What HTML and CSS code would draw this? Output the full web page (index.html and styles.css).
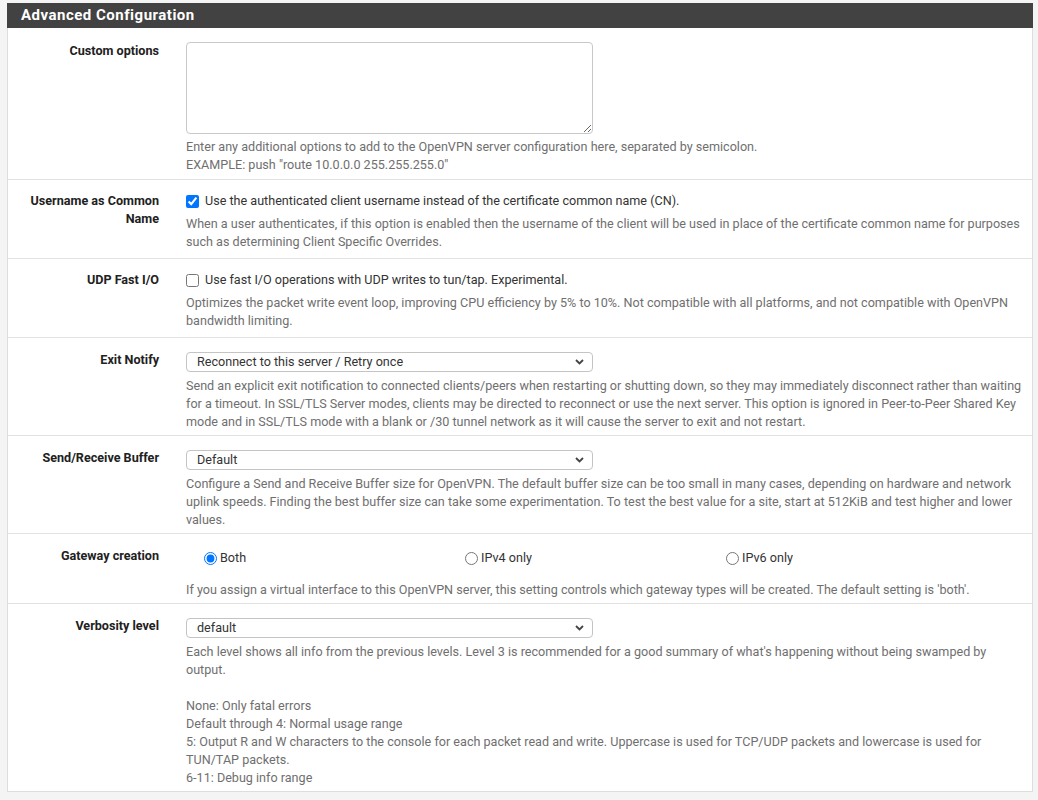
FILE: index.html
```html
<!DOCTYPE html>
<html lang="en">
<head>
<meta charset="utf-8">
<title>Advanced Configuration</title>
<link rel="stylesheet" href="styles.css">
</head>
<body>
<div class="page">
  <section class="panel">
    <h2 class="panel-title">Advanced Configuration</h2>

    <div class="row row-custom">
      <div class="label">Custom options</div>
      <div class="content">
        <textarea class="textarea"></textarea>
        <p class="help">Enter any additional options to add to the OpenVPN server configuration here, separated by semicolon.<br>EXAMPLE: push "route 10.0.0.0 255.255.255.0"</p>
      </div>
    </div>

    <div class="row row-check">
      <div class="label">Username as Common Name</div>
      <div class="content">
        <label class="check"><input type="checkbox" checked> Use the authenticated client username instead of the certificate common name (CN).</label>
        <p class="help">When a user authenticates, if this option is enabled then the username of the client will be used in place of the certificate common name for purposes such as determining Client Specific Overrides.</p>
      </div>
    </div>

    <div class="row row-check">
      <div class="label">UDP Fast I/O</div>
      <div class="content">
        <label class="check"><input type="checkbox"> Use fast I/O operations with UDP writes to tun/tap. Experimental.</label>
        <p class="help">Optimizes the packet write event loop, improving CPU efficiency by 5% to 10%. Not compatible with all platforms, and not compatible with OpenVPN bandwidth limiting.</p>
      </div>
    </div>

    <div class="row row-select">
      <div class="label">Exit Notify</div>
      <div class="content">
        <div class="select-wrap">
          <select class="select"><option>Reconnect to this server / Retry once</option></select>
          <svg class="chev" width="9" height="6" viewBox="0 0 9 6"><path d="M1 1l3.5 3.5L8 1" fill="none" stroke="#444" stroke-width="1.8"/></svg>
        </div>
        <p class="help">Send an explicit exit notification to connected clients/peers when restarting or shutting down, so they may immediately disconnect rather than waiting for a timeout. In SSL/TLS Server modes, clients may be directed to reconnect or use the next server. This option is ignored in Peer-to-Peer Shared Key mode and in SSL/TLS mode with a blank or /30 tunnel network as it will cause the server to exit and not restart.</p>
      </div>
    </div>

    <div class="row row-select">
      <div class="label">Send/Receive Buffer</div>
      <div class="content">
        <div class="select-wrap">
          <select class="select"><option>Default</option></select>
          <svg class="chev" width="9" height="6" viewBox="0 0 9 6"><path d="M1 1l3.5 3.5L8 1" fill="none" stroke="#444" stroke-width="1.8"/></svg>
        </div>
        <p class="help">Configure a Send and Receive Buffer size for OpenVPN. The default buffer size can be too small in many cases, depending on hardware and network uplink speeds. Finding the best buffer size can take some experimentation. To test the best value for a site, start at 512KiB and test higher and lower values.</p>
      </div>
    </div>

    <div class="row row-radio">
      <div class="label">Gateway creation</div>
      <div class="content">
        <div class="radios">
          <label class="radio"><input type="radio" name="gw" checked>Both</label>
          <label class="radio"><input type="radio" name="gw">IPv4 only</label>
          <label class="radio"><input type="radio" name="gw">IPv6 only</label>
        </div>
        <p class="help help-radio">If you assign a virtual interface to this OpenVPN server, this setting controls which gateway types will be created. The default setting is 'both'.</p>
      </div>
    </div>

    <div class="row row-select">
      <div class="label">Verbosity level</div>
      <div class="content">
        <div class="select-wrap">
          <select class="select"><option>default</option></select>
          <svg class="chev" width="9" height="6" viewBox="0 0 9 6"><path d="M1 1l3.5 3.5L8 1" fill="none" stroke="#444" stroke-width="1.8"/></svg>
        </div>
        <p class="help">Each level shows all info from the previous levels. Level 3 is recommended for a good summary of what's happening without being swamped by output.<br><br>None: Only fatal errors<br>Default through 4: Normal usage range<br>5: Output R and W characters to the console for each packet read and write. Uppercase is used for TCP/UDP packets and lowercase is used for TUN/TAP packets.<br>6-11: Debug info range</p>
      </div>
    </div>
  </section>
</div>
</body>
</html>
```

FILE: styles.css
```css
* { box-sizing: border-box; }

html, body {
  margin: 0;
  padding: 0;
  background: #f4f4f4;
  font-family: Roboto, "Liberation Sans", sans-serif;
  font-size: 12.6px;
  color: #212121;
}

.page {
  padding: 3px 5px 20px 7px;
}

.panel {
  background: #ffffff;
  border: 1px solid #dddddd;
  border-top: none;
}

.panel-title {
  margin: 0 -1px;
  height: 25px;
  line-height: 25px;
  background: #424242;
  color: #ffffff;
  font-size: 15px;
  font-weight: 700;
  letter-spacing: 0.5px;
  padding-left: 14px;
}

.row {
  display: grid;
  grid-template-columns: 166px 1fr;
  border-top: 1px solid #e2e2e2;
}

.row-custom { border-top: none; }

.label {
  text-align: right;
  font-weight: 700;
  line-height: 18px;
  padding: 13px 15px 0 15px;
  color: #212121;
}

.content {
  padding: 14px 8px 4px 12px;
}

.help {
  margin: 5px 0 0 0;
  line-height: 18px;
  color: #6f6f6f;
}

/* custom options */
.row-custom .label { padding-top: 14px; }
.row-custom .content { padding-top: 14px; padding-bottom: 5px; }
.textarea {
  display: block;
  width: 407px;
  height: 92px;
  border: 1px solid #c8c8c8;
  border-radius: 4px;
  margin: 0;
  padding: 4px 8px;
  font-family: inherit;
  font-size: 12.6px;
  resize: both;
}
.row-custom .help { margin-top: 4px; }

/* checkbox rows */
.row-check .label { padding-top: 12px; }
.row-check .content { padding-top: 12px; padding-bottom: 7px; }
.check {
  display: flex;
  align-items: center;
  line-height: 18px;
  color: #333333;
}
.check input {
  width: 13px;
  height: 13px;
  margin: 0 6px 0 0;
}

/* select rows */
.select-wrap {
  position: relative;
  width: 407px;
  height: 20px;
}
.select {
  appearance: none;
  -webkit-appearance: none;
  display: block;
  width: 407px;
  height: 20px;
  margin: 0;
  padding: 0 24px 0 10px;
  border: 1px solid #c4c4c4;
  border-radius: 4px;
  background: #ffffff;
  font-family: inherit;
  font-size: 12.6px;
  color: #333333;
  line-height: 18px;
}
.chev {
  position: absolute;
  right: 9px;
  top: 7px;
  pointer-events: none;
}

/* radio row */
.row-radio .content { padding-top: 15px; }
.radios {
  display: grid;
  grid-template-columns: 261px 261px 261px;
  line-height: 18px;
  color: #333333;
}
.radio {
  display: flex;
  align-items: center;
  padding-left: 18px;
}
.radio input {
  width: 13px;
  height: 13px;
  margin: 0 3px 0 0;
}
.help-radio { margin-top: 14px; }
```
